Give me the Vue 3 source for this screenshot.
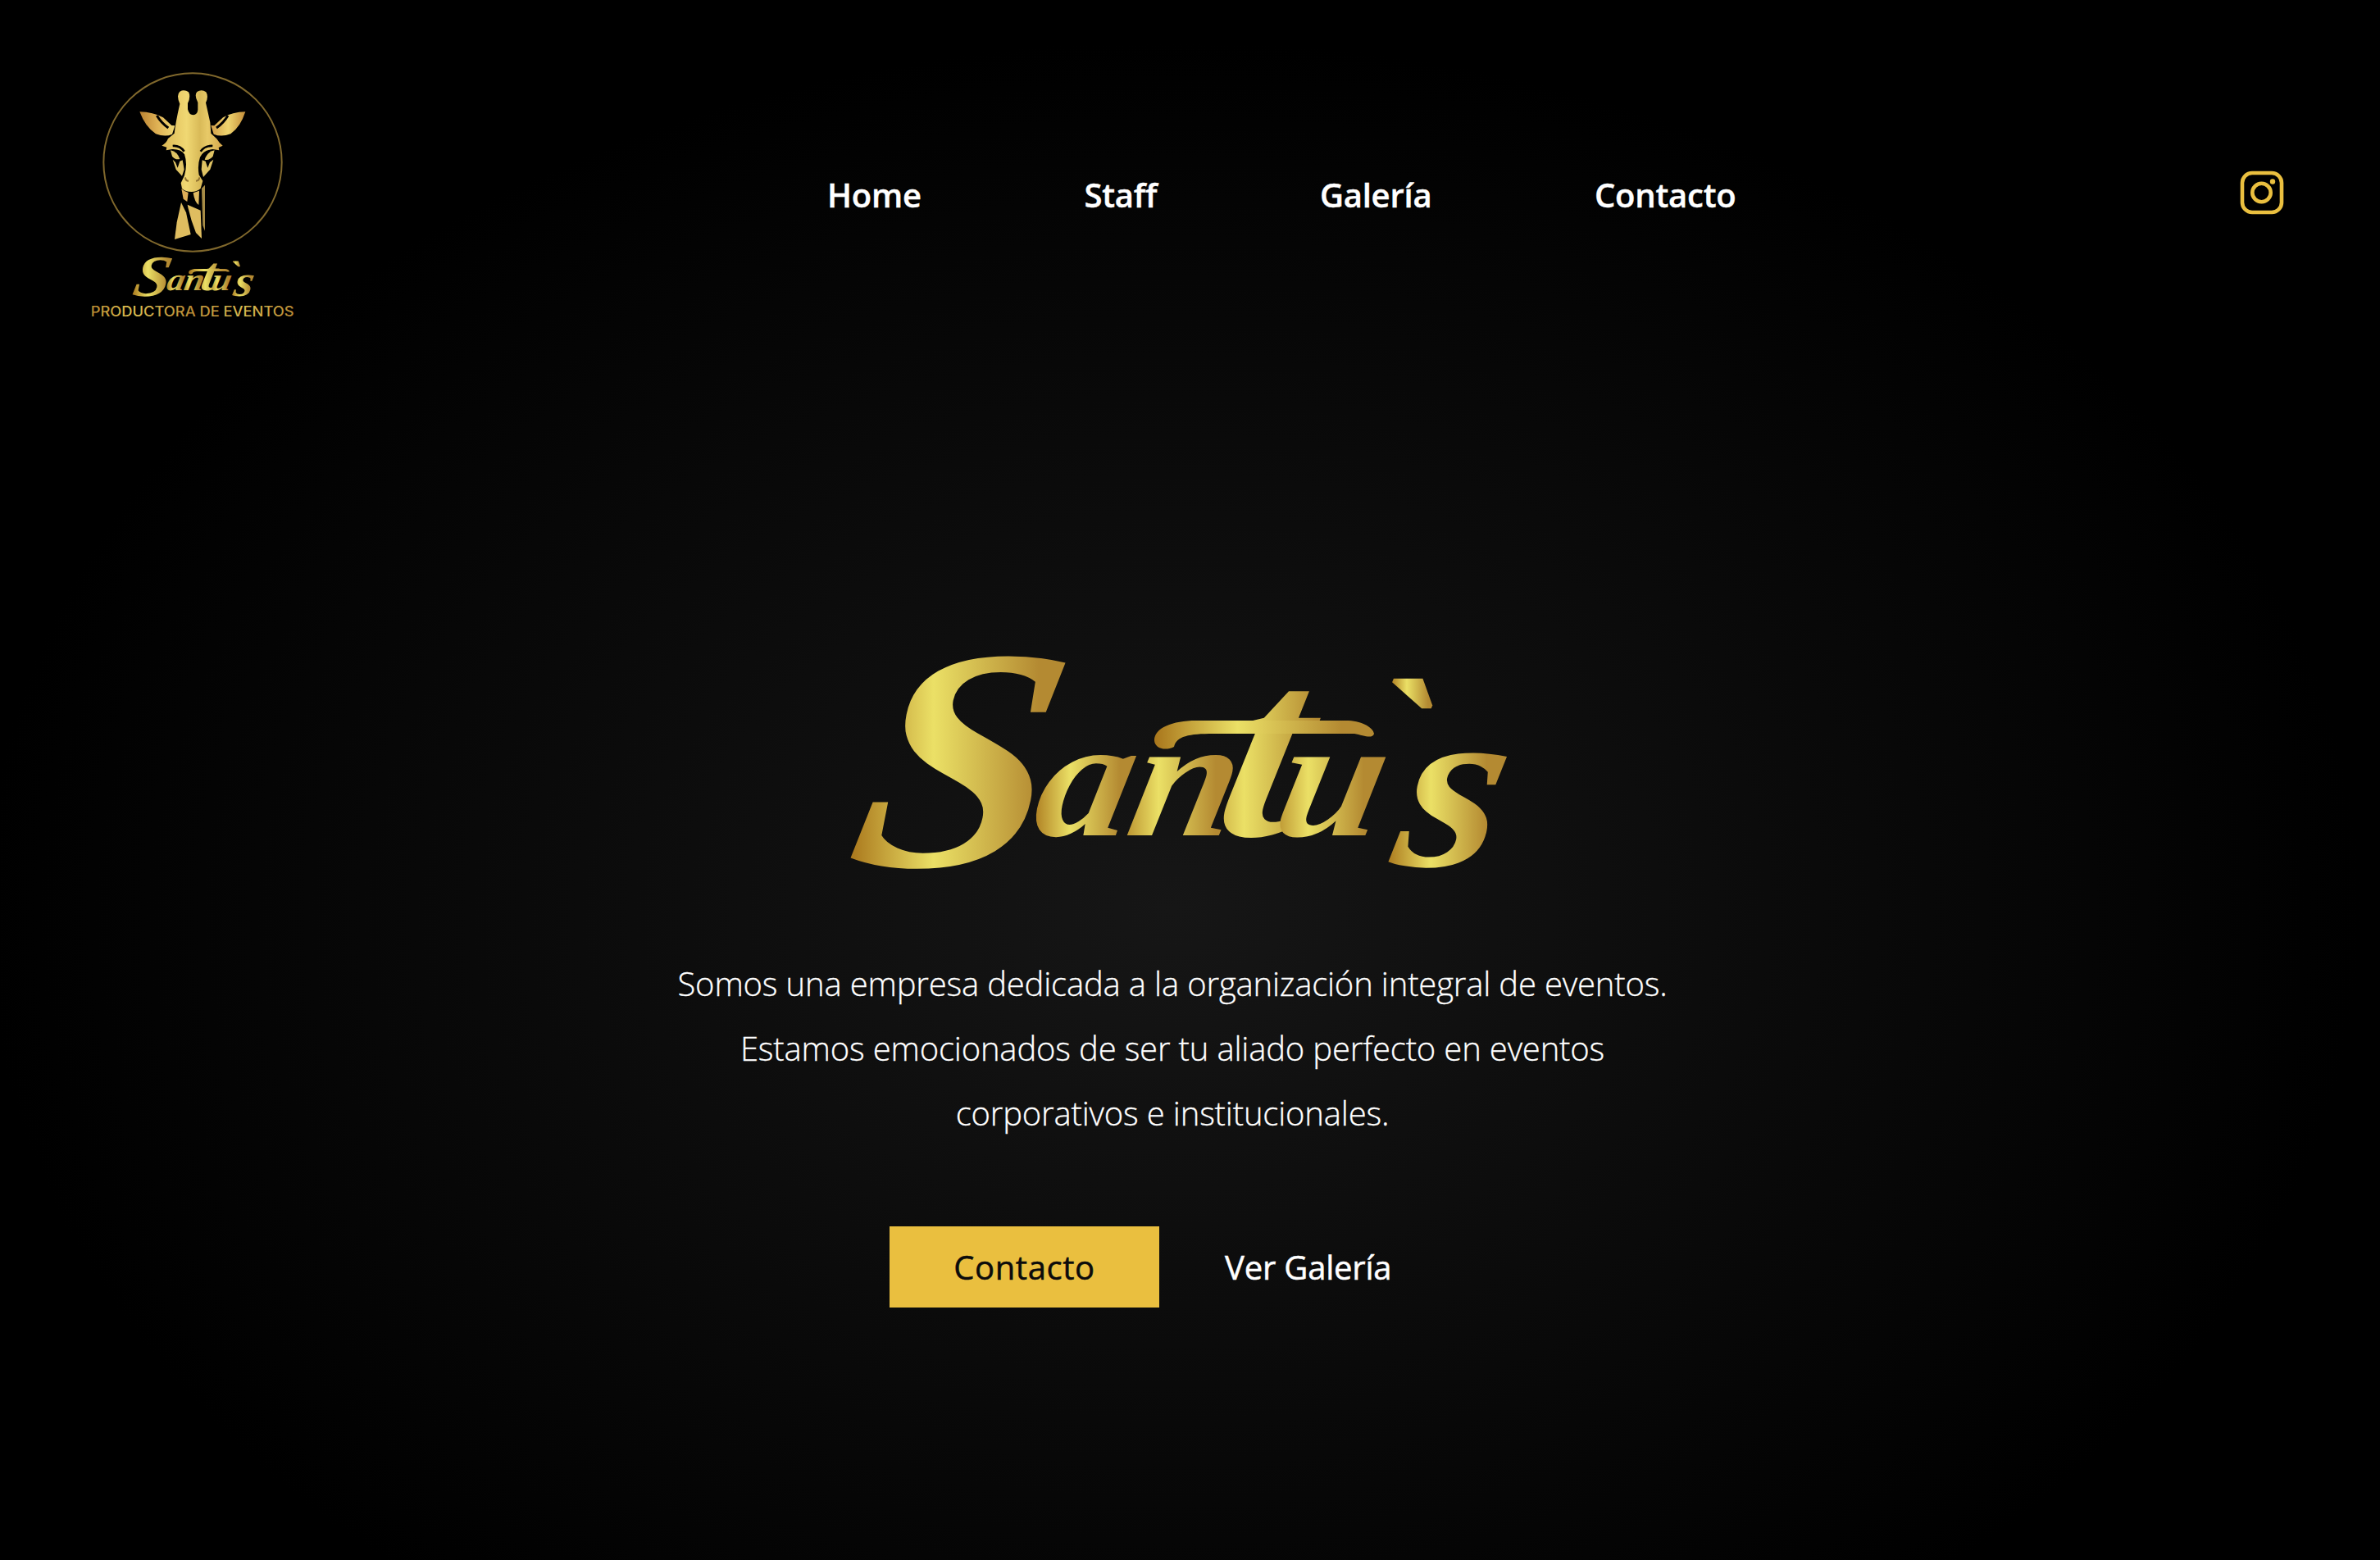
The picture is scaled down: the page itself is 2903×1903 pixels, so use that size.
<script setup>
const links = ['Home', 'Staff', 'Galería', 'Contacto']

// One entry per letter of the wordmark: position, size and extent of its gold gradient
const letters = [
  { ch: 'S', x: 0, y: 256, size: 386, from: 0, to: 273 },
  { ch: 'a', x: 197, y: 219, size: 208, from: 222, to: 350 },
  { ch: 'n', x: 299, y: 219, size: 208, from: 322, to: 470 },
  { ch: 't', x: 394, y: 219, size: 312, from: 410, to: 600 },
  { ch: 'u', x: 459, y: 219, size: 208, from: 506, to: 650 },
  { ch: '`', x: 531, y: 198, size: 245, from: 660, to: 715 },
  { ch: 's', x: 595, y: 256, size: 292, from: 655, to: 800 },
]
</script>

<template>
  <div class="page">
    <svg class="defs" width="0" height="0" aria-hidden="true">
      <defs>
        <linearGradient
          v-for="(l, i) in letters"
          :id="'gold' + i"
          :key="i"
          gradientUnits="userSpaceOnUse"
          gradientTransform="matrix(.893 0 .1786 1 -39.3 0)"
          :x1="l.from"
          y1="0"
          :x2="l.to"
          y2="0"
        >
          <stop offset="0" stop-color="#a8751b" />
          <stop offset=".38" stop-color="#ebe066" />
          <stop offset=".5" stop-color="#dcca58" />
          <stop offset=".85" stop-color="#b48a32" />
          <stop offset="1" stop-color="#b48a32" />
        </linearGradient>
        <linearGradient id="bar" gradientUnits="userSpaceOnUse" x1="372" y1="0" x2="642" y2="0">
          <stop offset="0" stop-color="#a8751b" />
          <stop offset=".38" stop-color="#ebe066" />
          <stop offset=".85" stop-color="#b48a32" />
        </linearGradient>
        <linearGradient id="face" gradientUnits="userSpaceOnUse" x1="325" y1="0" x2="545" y2="0">
          <stop offset="0" stop-color="#dcb855" />
          <stop offset=".4" stop-color="#f0d873" />
          <stop offset=".62" stop-color="#d9ba58" />
          <stop offset=".75" stop-color="#e8ca68" />
          <stop offset="1" stop-color="#d5a64b" />
        </linearGradient>
        <linearGradient id="earL" x1="0" x2="1">
          <stop offset="0" stop-color="#b98232" />
          <stop offset=".5" stop-color="#dfb154" />
          <stop offset="1" stop-color="#efd875" />
        </linearGradient>
        <linearGradient id="earR" x1="0" x2="1">
          <stop offset="0" stop-color="#d39f49" />
          <stop offset=".5" stop-color="#efd56f" />
          <stop offset="1" stop-color="#c48d39" />
        </linearGradient>
        <linearGradient id="tag" x1="0" x2="1">
          <stop offset="0" stop-color="#b98a30" />
          <stop offset=".2" stop-color="#dcc052" />
          <stop offset=".5" stop-color="#b98a34" />
          <stop offset=".75" stop-color="#d8bd52" />
          <stop offset="1" stop-color="#b98a34" />
        </linearGradient>
      </defs>
    </svg>

    <header class="header">
      <svg class="logo" viewBox="0 0 870 990">
        <circle cx="435" cy="384" r="326" fill="none" stroke="#80682c" stroke-width="6" />
        <path fill="url(#earL)" d="M241 199 Q290 200 327 220 L358 249 L370 250 L360 281 Q335 293 300 280 Q262 255 241 199Z" />
        <path fill="url(#earR)" d="M628 199 Q580 200 546 220 L514 250 L502 249 L512 281 Q540 293 574 280 Q610 255 628 199Z" />
        <path fill="none" stroke="#000" stroke-width="9" d="M304 213 Q320 240 346 258 M564 213 Q548 240 522 258" />
        <path
          fill="url(#face)"
          d="M388 170 Q374 138 388 125 Q404 116 420 127 Q429 143 417 168 L417 190 Q422 211 437 211 Q452 210 454 192 L454 165 Q440 138 451 126 Q468 115 484 127 Q494 143 483 166 L499 238 L502 278 L523 298 Q533 315 545 323 L530 330 L532 340 L508 336 Q474 340 462 365 Q452 395 458 430 L472 452 L464 480 Q450 492 431 492 Q408 492 396 480 L392 460 L405 432 Q417 390 405 355 Q392 335 360 336 L338 340 L340 329 L322 323 Q338 315 345 297 L368 278 Q372 240 388 170Z"
        />
        <path fill="none" stroke="#000" stroke-width="8" d="M362 324 Q388 322 404 344 M508 324 Q480 322 464 344" />
        <g fill="#dfc364">
          <path d="M354 340 Q378 344 388 372 Q372 376 360 362Z" />
          <path d="M515 340 Q490 344 479 374 Q497 378 509 362Z" />
          <path d="M362 374 L374 410 L396 434 L404 410 L398 376 L388 380 L380 404 L372 384Z" />
          <path d="M511 374 L499 410 L474 438 L467 410 L470 376 L482 380 L490 404 L498 384Z" />
        </g>
        <path fill="none" stroke="#8f7130" stroke-width="6" d="M408 439 Q409 452 420 452 M460 439 Q458 452 447 452" />
        <path fill="#dfae58" d="M394 481 Q405 491 419 495 L415 528 L401 518Z" />
        <path fill="#e0ba61" d="M437 496 L459 488 L457 540 Q442 530 437 496Z" />
        <path fill="#dfbd60" d="M393 531 L411 568 L428 648 L369 666 L377 604Z" />
        <path fill="#dfbd60" d="M416 539 L464 560 L468 663 L447 642 Q426 590 416 539Z" />
        <path fill="#a78c46" d="M468 479 L480 467 L480 635 L472 615Z" />
        <g transform="translate(213 730) scale(.556)">
          <text class="script" transform="matrix(1.12 0 -.2 1 44 0)">
            <tspan v-for="(l, i) in letters" :key="i" :x="l.x" :y="l.y" :font-size="l.size" :fill="`url(#gold${i})`">{{ l.ch }}</tspan>
          </text>
          <path fill="url(#bar)" d="M373 103 C373 88 395 79 424 79 H610 C628 80 640 88 641 95 C639 102 628 97 617 95 H445 C415 95 400 98 397 111 C385 117 373 112 373 103Z" />
        </g>
        <text class="tagline" x="62" y="948" textLength="744" lengthAdjust="spacingAndGlyphs" fill="url(#tag)">PRODUCTORA DE EVENTOS</text>
      </svg>

      <nav class="nav">
        <a v-for="link in links" :key="link">{{ link }}</a>
      </nav>

      <svg class="instagram" viewBox="0 0 54 54" fill="none" stroke="#eabf3f" stroke-width="4.6">
        <rect x="3" y="3" width="48" height="48" rx="12" />
        <circle cx="26.5" cy="27" r="11.2" />
        <circle cx="40" cy="13.5" r="3.2" fill="#eabf3f" stroke="none" />
      </svg>
    </header>

    <main class="hero">
      <svg class="wordmark" viewBox="-25 -20 840 300">
        <text class="script" transform="matrix(1.12 0 -.2 1 44 0)">
          <tspan v-for="(l, i) in letters" :key="i" :x="l.x" :y="l.y" :font-size="l.size" :fill="`url(#gold${i})`">{{ l.ch }}</tspan>
        </text>
        <path fill="url(#bar)" d="M373 103 C373 88 395 79 424 79 H610 C628 80 640 88 641 95 C639 102 628 97 617 95 H445 C415 95 400 98 397 111 C385 117 373 112 373 103Z" />
      </svg>
      <p class="intro">
        Somos una empresa dedicada a la organización integral de eventos.<br />
        Estamos emocionados de ser tu aliado perfecto en eventos<br />
        corporativos e institucionales.
      </p>
      <div class="actions">
        <a class="primary">Contacto</a>
        <a class="secondary">Ver Galería</a>
      </div>
    </main>
  </div>
</template>

<style>
body {
  background: #000;
}
</style>

<style scoped>
.page {
  box-sizing: border-box;
  width: 2903px;
  height: 1903px;
  overflow: hidden;
  background: radial-gradient(1450px 1060px at 1430px 1110px, #161616 0, #000 100%);
  color: #fff;
  font-family: 'Open Sans', sans-serif;
  font-size: 40px;
}
.defs {
  position: absolute;
}
.header {
  display: flex;
  align-items: center;
  height: 330px;
  padding: 70px 117px 0 90px;
}
.logo {
  width: 290px;
  height: 330px;
}
.nav {
  display: flex;
  gap: 198.6px;
  margin: 4px auto 0 629px;
  font-weight: 600;
  letter-spacing: -0.22px;
  -webkit-text-stroke: 0.4px currentColor;
}
.instagram {
  width: 54px;
  height: 54px;
}
.hero {
  display: flex;
  flex-direction: column;
  align-items: center;
  width: 2860px;
  padding-top: 380px;
}
.wordmark {
  width: 840px;
  height: 300px;
  overflow: visible;
}
.script {
  font-family: 'Liberation Serif', serif;
  font-weight: 700;
  font-style: italic;
}
.tagline {
  font-family: Inter, sans-serif;
  font-weight: 500;
  font-size: 50px;
}
.intro {
  margin: 80px 0 0;
  color: #fff;
  font-weight: 300;
  line-height: 79px;
  letter-spacing: -0.17px;
  text-align: center;
  white-space: nowrap;
  -webkit-text-stroke: 0.3px currentColor;
}
.actions {
  display: flex;
  align-items: center;
  gap: 80px;
  width: 690px;
  margin-top: 99px;
  font-weight: 500;
  letter-spacing: -0.2px;
  -webkit-text-stroke: 0.5px currentColor;
}
.primary {
  width: 329px;
  background: #eabf3f;
  color: #0b0b0b;
  letter-spacing: 0.6px;
  line-height: 99px;
  text-align: center;
}
</style>
